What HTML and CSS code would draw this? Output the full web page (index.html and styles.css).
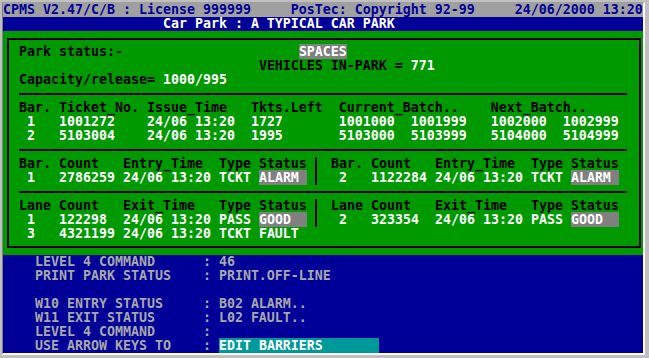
FILE: index.html
```html
<!DOCTYPE html>
<html lang="en">
<head>
    <meta charset="UTF-8">
    <title>CPMS - Car Park</title>
    <link rel="stylesheet" href="styles.css">
</head>
<body>

    <div class="screen">

        <!-- Title bars -->
        <div class="row titlebar">CPMS V2.47/C/B : License 999999     PosTec: Copyright 92-99     24/06/2000 13:20</div>
        <div class="row subtitle">                    Car Park : A TYPICAL CAR PARK</div>

        <!-- Park status panel -->
        <div class="panel">
            <div class="box">
                <div class="row">Park status:-                      <span class="hl">SPACES</span></div>
                <div class="row">                              VEHICLES IN-PARK = <span class="w">771</span></div>
                <div class="row">Capacity/release= <span class="w">1000/995</span></div>
                <div class="rule"></div>

                <div class="row">Bar. Ticket_No. Issue_Time   Tkts.Left  Current_Batch..    Next_Batch..</div>
                <div class="row w"> 1   1001272    24/06 13:20  1727       1001000  1001999   1002000  1002999</div>
                <div class="row w"> 2   5103004    24/06 13:20  1995       5103000  5103999   5104000  5104999</div>
                <div class="rule"></div>

                <div class="split">
                    <div class="half">
                        <div class="row">Bar. Count   Entry_Time  Type Status</div>
                        <div class="row w"> 1   2786259 24/06 13:20 TCKT <span class="hl">ALARM </span></div>
                    </div>
                    <div class="vbar"></div>
                    <div class="half right">
                        <div class="row">Bar. Count   Entry_Time  Type Status</div>
                        <div class="row w"> 2   1122284 24/06 13:20 TCKT <span class="hl">ALARM </span></div>
                    </div>
                </div>
                <div class="rule"></div>

                <div class="split">
                    <div class="half">
                        <div class="row">Lane Count   Exit_Time   Type Status</div>
                        <div class="row w"> 1   122298  24/06 13:20 PASS <span class="hl">GOOD  </span></div>
                    </div>
                    <div class="vbar"></div>
                    <div class="half right">
                        <div class="row">Lane Count   Exit_Time   Type Status</div>
                        <div class="row w"> 2   323354  24/06 13:20 PASS <span class="hl">GOOD  </span></div>
                    </div>
                </div>
                <div class="row w"> 3   4321199 24/06 13:20 TCKT FAULT</div>
            </div>
        </div>

        <!-- Command area -->
        <div class="commands">
            <div class="row">    LEVEL 4 COMMAND      : 46</div>
            <div class="row">    PRINT PARK STATUS    : PRINT.OFF-LINE</div>
            <div class="row"> </div>
            <div class="row">    W10 ENTRY STATUS     : B02 ALARM..</div>
            <div class="row">    W11 EXIT STATUS      : L02 FAULT..</div>
            <div class="row">    LEVEL 4 COMMAND      :</div>
            <div class="row">    USE ARROW KEYS TO    : <span class="select">EDIT BARRIERS       </span></div>
        </div>

    </div>

</body>
</html>
```

FILE: styles.css
```css
/* Window frame */
body {
    margin: 0;
    padding: 2px 0 0 2px;
    background: #c0c0c0;
}

/* 80x25 text screen, 8x14 cells */
.screen {
    width: 640px;
    border-left: 1px solid #808080;
    border-top: 1px solid #a0a0a0;
    border-right: 2px solid #ffffff;
    border-bottom: 2px solid #ffffff;
    font-family: "DejaVu Sans Mono", monospace;
    font-weight: bold;
    font-size: 13.29px;
}

.row {
    height: 14px;
    line-height: 14px;
    white-space: pre;
}

/* Title bars */
.titlebar {
    background: #a0a0a0;
    color: #000099;
}

.subtitle {
    background: #000099;
    color: #ffffff;
}

/* Green status panel */
.panel {
    background: #009900;
    color: #000000;
    height: 224px;
    padding: 7px 2px 7px 4px;
    box-sizing: border-box;
}

.box {
    border: 2px solid #000000;
    padding: 5px 0 5px 10px;
    height: 100%;
    box-sizing: border-box;
}

.rule {
    width: 608px;
    height: 6px;
    border-bottom: 2px solid #000000;
    margin-bottom: 6px;
}

.split {
    display: flex;
}

.half {
    width: 296px;
}

.half.right {
    padding-left: 14px;
}

.vbar {
    width: 2px;
    background: #000000;
}

.w {
    color: #ffffff;
}

.hl {
    background: #808080;
    color: #ffffff;
}

/* Blue command area */
.commands {
    background: #000099;
    color: #a8a8a8;
}

.select {
    background: #009999;
    color: #ffffff;
}
```
